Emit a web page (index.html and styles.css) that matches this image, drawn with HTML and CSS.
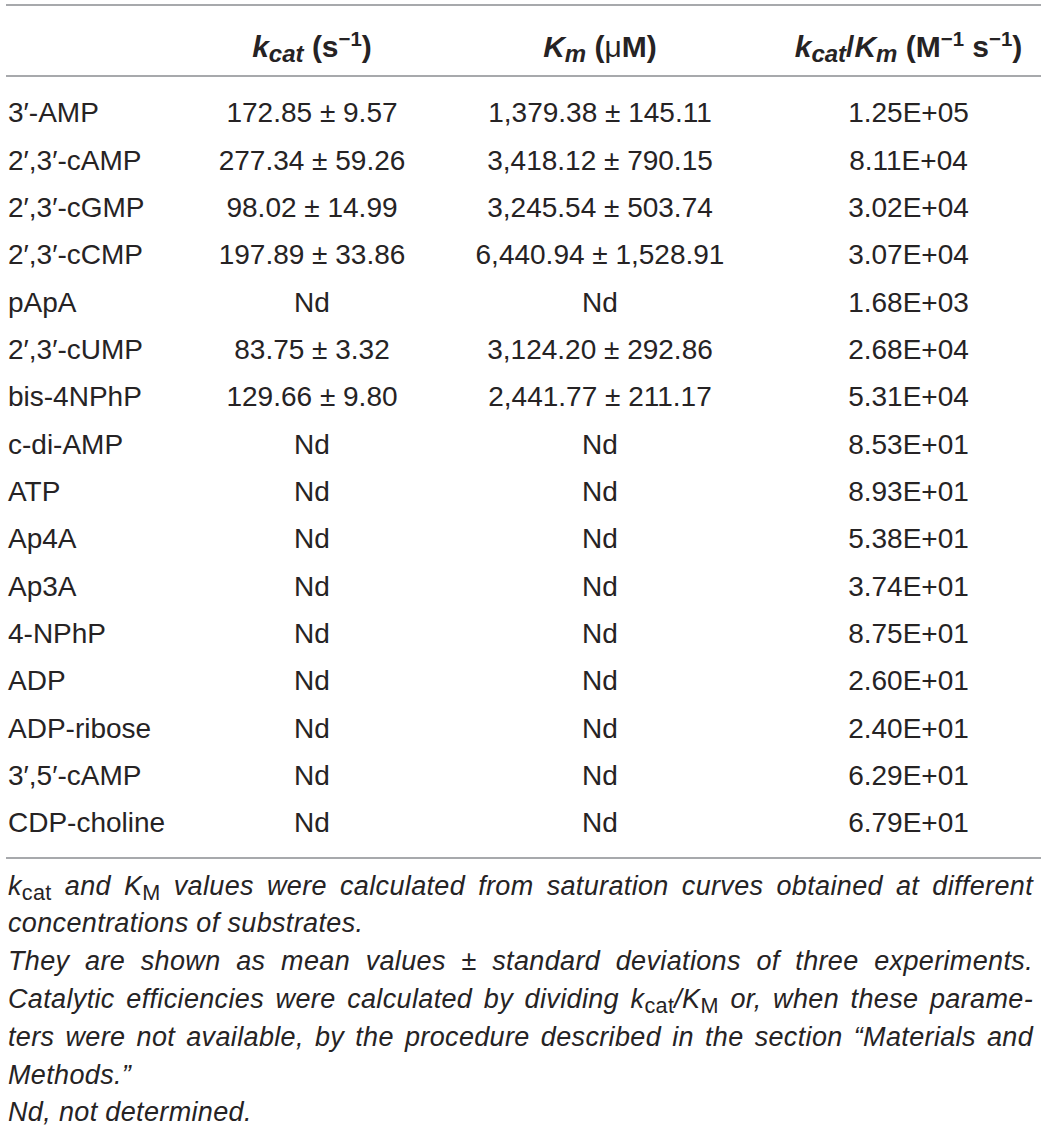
FILE: index.html
```html
<!DOCTYPE html>
<html lang="en">
<head>
<meta charset="utf-8">
<title>Kinetic parameters</title>
<link rel="stylesheet" href="styles.css">
</head>
<body>
<div class="table">
  <div class="thead row-grid">
    <div class="cell first"></div>
    <div class="cell"><i>k</i><sub><i>cat</i></sub> (s<sup>−1</sup>)</div>
    <div class="cell"><i>K</i><sub><i>m</i></sub> (<span class="mu">μ</span>M)</div>
    <div class="cell"><i>k</i><sub><i>cat</i></sub>/<i>K</i><sub><i>m</i></sub> (M<sup>−1</sup> s<sup>−1</sup>)</div>
  </div>
  <div class="tbody">
    <div class="row row-grid"><div class="cell first">3′-AMP</div><div class="cell">172.85 ± 9.57</div><div class="cell">1,379.38 ± 145.11</div><div class="cell">1.25E+05</div></div>
    <div class="row row-grid"><div class="cell first">2′,3′-cAMP</div><div class="cell">277.34 ± 59.26</div><div class="cell">3,418.12 ± 790.15</div><div class="cell">8.11E+04</div></div>
    <div class="row row-grid"><div class="cell first">2′,3′-cGMP</div><div class="cell">98.02 ± 14.99</div><div class="cell">3,245.54 ± 503.74</div><div class="cell">3.02E+04</div></div>
    <div class="row row-grid"><div class="cell first">2′,3′-cCMP</div><div class="cell">197.89 ± 33.86</div><div class="cell">6,440.94 ± 1,528.91</div><div class="cell">3.07E+04</div></div>
    <div class="row row-grid"><div class="cell first">pApA</div><div class="cell">Nd</div><div class="cell">Nd</div><div class="cell">1.68E+03</div></div>
    <div class="row row-grid"><div class="cell first">2′,3′-cUMP</div><div class="cell">83.75 ± 3.32</div><div class="cell">3,124.20 ± 292.86</div><div class="cell">2.68E+04</div></div>
    <div class="row row-grid"><div class="cell first">bis-4NPhP</div><div class="cell">129.66 ± 9.80</div><div class="cell">2,441.77 ± 211.17</div><div class="cell">5.31E+04</div></div>
    <div class="row row-grid"><div class="cell first">c-di-AMP</div><div class="cell">Nd</div><div class="cell">Nd</div><div class="cell">8.53E+01</div></div>
    <div class="row row-grid"><div class="cell first">ATP</div><div class="cell">Nd</div><div class="cell">Nd</div><div class="cell">8.93E+01</div></div>
    <div class="row row-grid"><div class="cell first">Ap4A</div><div class="cell">Nd</div><div class="cell">Nd</div><div class="cell">5.38E+01</div></div>
    <div class="row row-grid"><div class="cell first">Ap3A</div><div class="cell">Nd</div><div class="cell">Nd</div><div class="cell">3.74E+01</div></div>
    <div class="row row-grid"><div class="cell first">4-NPhP</div><div class="cell">Nd</div><div class="cell">Nd</div><div class="cell">8.75E+01</div></div>
    <div class="row row-grid"><div class="cell first">ADP</div><div class="cell">Nd</div><div class="cell">Nd</div><div class="cell">2.60E+01</div></div>
    <div class="row row-grid"><div class="cell first">ADP-ribose</div><div class="cell">Nd</div><div class="cell">Nd</div><div class="cell">2.40E+01</div></div>
    <div class="row row-grid"><div class="cell first">3′,5′-cAMP</div><div class="cell">Nd</div><div class="cell">Nd</div><div class="cell">6.29E+01</div></div>
    <div class="row row-grid"><div class="cell first">CDP-choline</div><div class="cell">Nd</div><div class="cell">Nd</div><div class="cell">6.79E+01</div></div>
  </div>
</div>
<div class="notes">
  <span class="line just">k<sub>cat</sub> and K<sub>M</sub> values were calculated from saturation curves obtained at different</span>
  <span class="line">concentrations of substrates.</span>
  <span class="line just">They are shown as mean values ± standard deviations of three experiments.</span>
  <span class="line just">Catalytic efficiencies were calculated by dividing k<sub>cat</sub>/K<sub>M</sub> or, when these parame-</span>
  <span class="line just">ters were not available, by the procedure described in the section “Materials and</span>
  <span class="line">Methods.”</span>
  <span class="line">Nd, not determined.</span>
</div>
</body>
</html>
```
FILE: styles.css
```css
html, body {
  margin: 0;
  padding: 0;
  background: #ffffff;
}

body {
  font-family: "Liberation Sans", Arial, sans-serif;
  color: #262324;
}

.table {
  margin-left: 6px;
  width: 1035px;
  font-size: 28px;
}

.row-grid {
  display: grid;
  grid-template-columns: 194px 224px 352px 265px;
}

.cell {
  text-align: center;
  white-space: nowrap;
}

.cell.first {
  text-align: left;
  padding-left: 2px;
}

.thead {
  margin-top: 4px;
  border-top: 2px solid #a7a9ac;
  border-bottom: 2px solid #a7a9ac;
  padding: 25px 0 12px;
  line-height: 32px;
  font-size: 30px;
  font-weight: bold;
}

.thead sub {
  font-size: 0.8em;
  line-height: 0;
  vertical-align: -0.2em;
}

.thead sup {
  font-size: 0.68em;
  line-height: 0;
  vertical-align: 0.55em;
}

.thead .mu {
  font-weight: normal;
}

.tbody {
  padding: 12.3px 0 10px;
  border-bottom: 2px solid #a7a9ac;
}

.row {
  height: 47.33px;
  line-height: 47.33px;
}

.notes {
  margin: 9px 0 0 8px;
  width: 1025px;
  font-style: italic;
  font-size: 27px;
  letter-spacing: 0.35px;
  line-height: 37.8px;
}

.notes .line {
  display: block;
  white-space: nowrap;
}

.notes .line.just {
  text-align: justify;
  text-align-last: justify;
}

.notes sub {
  font-style: normal;
  font-size: 0.8em;
  line-height: 0;
  vertical-align: -0.25em;
}
```
